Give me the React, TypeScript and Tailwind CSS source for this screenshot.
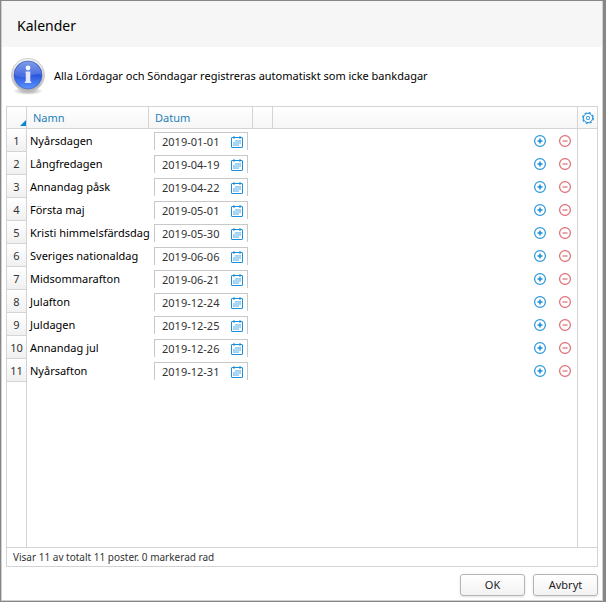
import { useState } from "react";

const holidays = [
  { name: "Nyårsdagen", date: "2019-01-01" },
  { name: "Långfredagen", date: "2019-04-19" },
  { name: "Annandag påsk", date: "2019-04-22" },
  { name: "Första maj", date: "2019-05-01" },
  { name: "Kristi himmelsfärdsdag", date: "2019-05-30" },
  { name: "Sveriges nationaldag", date: "2019-06-06" },
  { name: "Midsommarafton", date: "2019-06-21" },
  { name: "Julafton", date: "2019-12-24" },
  { name: "Juldagen", date: "2019-12-25" },
  { name: "Annandag jul", date: "2019-12-26" },
  { name: "Nyårsafton", date: "2019-12-31" },
];

function InfoIcon() {
  return (
    <svg viewBox="0 0 36 40" className="h-10 w-9 shrink-0" aria-hidden="true">
      <defs>
        <linearGradient id="ring" x1="0" y1="0" x2="0" y2="1">
          <stop offset="0" stopColor="#f6f6f6" />
          <stop offset="1" stopColor="#b4b4b4" />
        </linearGradient>
        <linearGradient id="ball" x1="0" y1="0" x2="0" y2="1">
          <stop offset="0" stopColor="#3a66d6" />
          <stop offset="0.5" stopColor="#2a55dc" />
          <stop offset="1" stopColor="#5c94ff" />
        </linearGradient>
        <linearGradient id="gloss" x1="0" y1="0" x2="0" y2="1">
          <stop offset="0" stopColor="#fff" stopOpacity="0.35" />
          <stop offset="1" stopColor="#fff" stopOpacity="0.12" />
        </linearGradient>
        <radialGradient id="shade">
          <stop offset="0" stopColor="#000" stopOpacity="0.4" />
          <stop offset="1" stopColor="#000" stopOpacity="0" />
        </radialGradient>
      </defs>
      <ellipse cx="18" cy="35" rx="15" ry="4" fill="url(#shade)" />
      <circle cx="18" cy="19" r="16.5" fill="url(#ring)" stroke="#c4c4c4" strokeWidth="0.8" />
      <circle cx="18" cy="19" r="14" fill="url(#ball)" stroke="#3558b4" strokeWidth="0.6" />
      <path d="M4.6 19a13.4 13.4 0 0 1 26.8 0c-5-3-11 2-17 2s-8-1-9.800-2z" fill="url(#gloss)" />
      <circle cx="18" cy="12" r="2.4" fill="#f2f4ff" />
      <path d="M15.500 15.500h4.800v10h.9v1.500h-6.400v-1.500h1v-8.500h-.3z" fill="#e4e8fa" />
    </svg>
  );
}

function CalendarIcon() {
  return (
    <svg viewBox="0 0 12 12" className="size-3" aria-hidden="true">
      <rect x="0.5" y="1.5" width="11" height="10" rx="0.5" fill="#fff" stroke="#1a8fdb" />
      <path d="M3 0v3M9 0v3" stroke="#1a8fdb" />
      <path d="M4 4h6v4H8v2H2V6h2z" fill="#8fcaf2" />
      <path d="M2 6h8M2 8h8M4 4v6M6 4v6M8 4v6" stroke="#dceefb" strokeWidth="0.4" />
    </svg>
  );
}

function PlusIcon() {
  return (
    <svg viewBox="0 0 12 12" className="size-3" fill="none" aria-hidden="true">
      <circle cx="6" cy="6" r="5.4" stroke="#2a96dc" strokeWidth="1.2" />
      <path d="M6 3.500v5M3.500 6h5" stroke="#1a8fdb" strokeWidth="1.5" />
    </svg>
  );
}

function MinusIcon() {
  return (
    <svg viewBox="0 0 12 12" className="size-3" fill="none" aria-hidden="true">
      <circle cx="6" cy="6" r="5.4" stroke="#dd6a70" strokeWidth="1.2" />
      <path d="M3.500 6h5" stroke="#e08a8e" strokeWidth="1.5" />
    </svg>
  );
}

function GearIcon() {
  return (
    <svg viewBox="0 0 12 12" className="size-3" fill="none" stroke="#2a96dc" aria-hidden="true">
      <circle cx="6" cy="6" r="5.4" strokeWidth="1.2" strokeDasharray="2.4 1.84" />
      <circle cx="6" cy="6" r="4.6" strokeWidth="1" />
      <circle cx="6" cy="6" r="1.7" strokeWidth="0.9" />
    </svg>
  );
}

const headCell =
  "h-[23px] border-y border-r border-[#d4d4d4] bg-linear-to-b from-white to-[#f6f6f6] p-0 text-left font-normal text-[#2580b8]";

const dialogButton =
  "h-[22px] w-[65px] rounded-[3px] border border-[#b4b4b4] bg-linear-to-b from-white to-[#f2f2f2] text-[#222] shadow-sm";

export default function App() {
  const [rows, setRows] = useState(holidays);

  const addRow = (i: number) =>
    setRows([...rows.slice(0, i + 1), { name: "", date: "" }, ...rows.slice(i + 1)]);
  const removeRow = (i: number) => setRows(rows.filter((_, n) => n !== i));

  return (
    <div className="flex min-h-screen bg-[#868686] pt-px pr-[3px] pb-px pl-px font-['Noto_Sans','Open_Sans',sans-serif] text-black">
      <main
        role="dialog"
        aria-labelledby="title"
        className="flex flex-1 flex-col border border-t-0 border-[#d0d0d0] bg-white"
      >
        <header className="flex h-[46px] items-center bg-[#f6f6f6] px-[15px] pt-1">
          <h1 id="title" className="text-[14px] leading-5">
            Kalender
          </h1>
        </header>

        <div className="flex items-center gap-2 px-2 pt-[9px]">
          <InfoIcon />
          <p className="text-[11px] leading-4">
            Alla Lördagar och Söndagar registreras automatiskt som icke bankdagar
          </p>
        </div>

        <div className="mx-1 mt-2.5 flex flex-1 flex-col text-[11px] leading-4">
          <table className="w-full table-fixed border-separate border-spacing-0">
            <colgroup>
              <col className="w-[21px]" />
              <col className="w-[122px]" />
              <col className="w-[104px]" />
              <col className="w-5" />
              <col />
              <col className="w-5" />
            </colgroup>
            <thead>
              <tr>
                <th className={`${headCell} border-l align-bottom`}>
                  <svg viewBox="0 0 6 6" className="ml-auto mb-0.5 size-1.5" aria-hidden="true">
                    <path d="M6 0v6H0z" fill="#0a84d8" />
                  </svg>
                </th>
                <th className={headCell}>
                  <span className="block px-1.5">Namn</span>
                </th>
                <th className={headCell}>
                  <span className="block px-1.5">Datum</span>
                </th>
                <th className={headCell} />
                <th className={headCell} />
                <th className={headCell}>
                  <button type="button" aria-label="Inställningar" className="flex w-full justify-center">
                    <GearIcon />
                  </button>
                </th>
              </tr>
            </thead>
            <tbody>
              {rows.map((row, i) => (
                <tr key={`${row.name}-${i}`} className="h-[23px]">
                  <td className="border-x border-b border-[#d4d4d4] bg-linear-to-b from-white to-[#f0f0f0] p-0 pt-0.5 text-center text-[#333]">
                    {i + 1}
                  </td>
                  <td className="p-0 pl-[3px] whitespace-nowrap">{row.name}</td>
                  <td className="p-0 pt-[3px] pl-[5px] align-top">
                    <div className="flex h-[18px] w-[94px] items-center justify-between border border-b-0 border-[#c8c8c8] pr-1 pl-[7px]">
                      <input
                        aria-label={`Datum ${row.name}`}
                        defaultValue={row.date}
                        className="h-4 w-16 bg-transparent text-[#333] outline-none"
                      />
                      <button type="button" aria-label="Välj datum">
                        <CalendarIcon />
                      </button>
                    </div>
                  </td>
                  <td className="p-0" />
                  <td className="border-r border-[#d4d4d4] p-0">
                    <div className="flex justify-end gap-[13px] pr-1.5">
                      <button type="button" aria-label="Lägg till rad" onClick={() => addRow(i)}>
                        <PlusIcon />
                      </button>
                      <button type="button" aria-label="Ta bort rad" onClick={() => removeRow(i)}>
                        <MinusIcon />
                      </button>
                    </div>
                  </td>
                  <td className="border-r border-[#d4d4d4] p-0" />
                </tr>
              ))}
            </tbody>
          </table>

          {/* empty part of the grid, keeps the outer columns running down */}
          <div className="flex flex-1 justify-between border-x border-[#d4d4d4]" aria-hidden="true">
            <div className="w-5 border-r border-[#d4d4d4]" />
            <div className="w-5 border-l border-[#d4d4d4]" />
          </div>

          <p className="h-5 border border-[#d4d4d4] px-1.5 text-[10px] leading-[18px] text-[#333]">
            Visar {rows.length} av totalt {rows.length} poster. 0 markerad rad
          </p>
        </div>

        <footer className="flex justify-end gap-2 px-1 pt-[7px] pb-1 text-[11px]">
          <button type="button" className={dialogButton}>
            OK
          </button>
          <button type="button" className={dialogButton}>
            Avbryt
          </button>
        </footer>
      </main>
    </div>
  );
}
